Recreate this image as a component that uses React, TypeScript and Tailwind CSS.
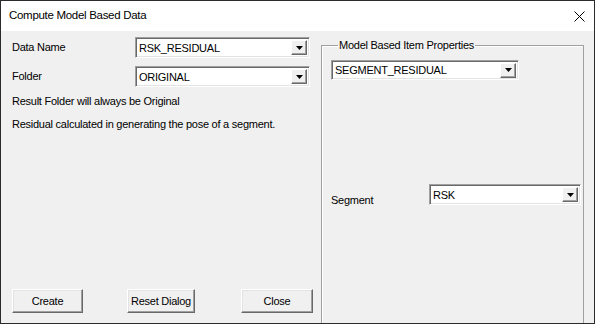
import React from 'react';

const ui = { fontFamily: '"Liberation Sans", Arial, sans-serif' };

const Combo: React.FC<{ value: string; className?: string }> = ({ value, className }) => (
  <div
    className={`flex items-center bg-white border border-t-[#a0a0a0] border-l-[#a0a0a0] border-b-white border-r-white shadow-[inset_1px_1px_0_#696969,inset_-1px_-1px_0_#e3e3e3] pl-[3px] pr-[2px] ${className ?? ''}`}
  >
    <span className="flex-1 text-[11px] text-black leading-none pt-[1px]">{value}</span>
    <div className="w-[16px] h-[15px] bg-[#f0f0f0] border border-t-white border-l-white border-b-[#696969] border-r-[#696969] shadow-[inset_-1px_-1px_0_#a0a0a0] flex items-center justify-center">
      <svg width="7" height="4" viewBox="0 0 7 4">
        <path d="M0 0h7L3.5 4z" fill="#000" />
      </svg>
    </div>
  </div>
);

const Btn: React.FC<{ label: string; className?: string }> = ({ label, className }) => (
  <button
    className={`h-[24px] bg-[#f0f0f0] border border-t-white border-l-white border-b-[#696969] border-r-[#696969] shadow-[inset_-1px_-1px_0_#a0a0a0,inset_1px_1px_0_#e3e3e3] text-[11px] text-black ${className ?? ''}`}
  >
    {label}
  </button>
);

export default function App() {
  return (
    <div className="w-[595px] h-[324px] border border-[#2b2b2b] flex flex-col overflow-hidden tracking-[-0.25px]" style={ui}>
      <div className="h-[30px] bg-white flex items-center justify-between pl-[8px] pr-[9px]">
        <span className="text-[11.5px] text-black tracking-[-0.3px]">Compute Model Based Data</span>
        <svg width="11" height="11" viewBox="0 0 11 11">
          <path d="M0.5 0.5l10 10M10.5 0.5l-10 10" stroke="#000" strokeWidth="1" />
        </svg>
      </div>
      <div className="flex-1 bg-[#f0f0f0] flex min-h-0">
        <div className="w-[320px] flex flex-col pl-[11px] pt-[6px] pb-[10px]">
          <div className="flex items-center h-[21px]">
            <span className="w-[123px] text-[11px] text-black">Data Name</span>
            <Combo value="RSK_RESIDUAL" className="w-[175px] h-[21px]" />
          </div>
          <div className="flex items-center h-[21px] mt-[8px]">
            <span className="w-[123px] text-[11px] text-black">Folder</span>
            <Combo value="ORIGINAL" className="w-[175px] h-[21px]" />
          </div>
          <p className="text-[11px] text-black mt-[6px]">Result Folder will always be Original</p>
          <p className="text-[11px] text-black mt-[6px]">Residual calculated in generating the pose of a segment.</p>
          <div className="mt-auto flex gap-[44px]">
            <Btn label="Create" className="w-[71px]" />
            <Btn label="Reset Dialog" className="w-[68px]" />
            <Btn label="Close" className="w-[72px] ml-[2px]" />
          </div>
        </div>
        <fieldset className="mt-[9px] w-[263px] border border-b-0 border-[#a0a0a0] shadow-[inset_1px_1px_0_#fff] pl-[9px]">
          <legend className="ml-[7px] px-[1px] text-[11px] text-black leading-none">Model Based Item Properties</legend>
          <Combo value="SEGMENT_RESIDUAL" className="w-[188px] h-[20px] mt-[9px]" />
          <div className="flex items-start mt-[104px]">
            <span className="w-[98px] text-[11px] text-black mt-[8px]">Segment</span>
            <Combo value="RSK" className="w-[152px] h-[21px]" />
          </div>
        </fieldset>
      </div>
    </div>
  );
}
